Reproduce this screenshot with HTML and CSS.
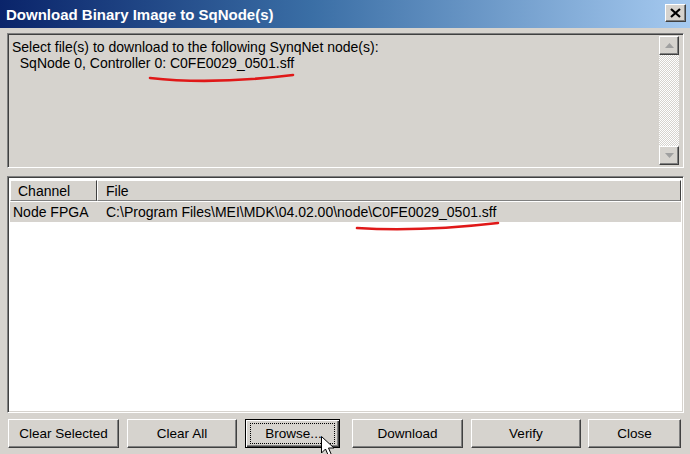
FILE: index.html
```html
<!DOCTYPE html>
<html>
<head>
<meta charset="utf-8">
<link rel="stylesheet" href="styles.css">
</head>
<body>
<div class="window">
  <div class="titlebar">
    <span class="title">Download Binary Image to SqNode(s)</span>
    <div class="close-btn">
      <svg width="11" height="10" viewBox="0 0 11 10"><path d="M1 1 L10 9 M10 1 L1 9" stroke="#000" stroke-width="2.2"/></svg>
    </div>
  </div>
  <div class="content">
    <div class="info sunken">
      <div class="info-text">Select file(s) to download to the following SynqNet node(s):
  SqNode 0, Controller 0: C0FE0029_0501.sff</div>
      <div class="vscroll">
        <div class="sbtn"><svg width="9" height="5" viewBox="0 0 9 5"><path d="M4.5 0 L9 5 L0 5 Z" fill="#a0a0a0"/></svg></div>
        <div class="track"></div>
        <div class="sbtn"><svg width="9" height="5" viewBox="0 0 9 5"><path d="M0 0 L9 0 L4.5 5 Z" fill="#a0a0a0"/></svg></div>
      </div>
    </div>
    <div class="list sunken">
      <div class="header">
        <div class="hcell ch">Channel</div>
        <div class="hcell file">File</div>
      </div>
      <div class="row selected">
        <div class="cell ch">Node FPGA</div>
        <div class="cell file">C:\Program Files\MEI\MDK\04.02.00\node\C0FE0029_0501.sff</div>
      </div>
    </div>
    <div class="buttons">
      <div class="btn w111">Clear Selected</div>
      <div class="btn w110">Clear All</div>
      <div class="btn default w95"><span class="focus">Browse...</span></div>
      <div class="btn w111 gap-wide">Download</div>
      <div class="btn w110">Verify</div>
      <div class="btn w93 gap-narrow">Close</div>
    </div>
  </div>
  <svg class="annot" width="690" height="454" viewBox="0 0 690 454">
    <path d="M150 78 Q 212 85 293 75" stroke="#e01818" stroke-width="2.6" fill="none" stroke-linecap="round"/>
    <path d="M357 228 Q 420 232 498 223" stroke="#e01818" stroke-width="2.6" fill="none" stroke-linecap="round"/>
    <path d="M321.5 436.5 L321.5 453 L325.5 449 L328.5 456 L331.5 455 L328.5 448 L334 448 Z" fill="#fff" stroke="#000" stroke-width="1" stroke-linejoin="miter"/>
  </svg>
</div>
</body>
</html>
```
FILE: styles.css
```css
* { box-sizing: border-box; }
html, body { margin: 0; padding: 0; }
body {
  width: 690px;
  height: 454px;
  overflow: hidden;
  background: #d6d3ce;
  font-family: "Liberation Sans", Arial, sans-serif;
  font-size: 14px;
  color: #000;
}
.window {
  position: relative;
  width: 690px;
  height: 454px;
}
.titlebar {
  height: 28px;
  display: flex;
  align-items: center;
  justify-content: space-between;
  padding: 0 4px 0 6px;
  background: linear-gradient(to right, #0a246a 0%, #3a6ea5 45%, #a6caf0 100%);
}
.title {
  color: #fff;
  font-weight: bold;
  font-size: 15px;
}
.close-btn {
  width: 21px;
  height: 18px;
  margin-top: -2px;
  background: #d6d3ce;
  border: 1px solid;
  border-color: #fff #404040 #404040 #fff;
  box-shadow: inset -1px -1px #808080;
  display: flex;
  align-items: center;
  justify-content: center;
}
.content {
  padding: 5px 6px 0 7px;
}
.sunken {
  border: 1px solid;
  border-color: #808080 #fff #fff #808080;
  box-shadow: inset 1px 1px #404040, inset -1px -1px #d6d3ce;
}
.info {
  height: 135px;
  display: flex;
  padding: 2px;
}
.info-text {
  flex: 1;
  white-space: pre;
  padding: 3px 0 0 2px;
  line-height: 16px;
}
.vscroll {
  width: 20px;
  margin-right: 2px;
  display: flex;
  flex-direction: column;
}
.sbtn {
  height: 19px;
  background: #d6d3ce;
  border: 1px solid;
  border-color: #fff #404040 #404040 #fff;
  box-shadow: inset -1px -1px #808080;
  display: flex;
  align-items: center;
  justify-content: center;
}
.track {
  flex: 1;
  background-color: #eeedea;
  background-image: repeating-conic-gradient(#d6d3ce 0 25%, #fff 0 50%);
  background-size: 2px 2px;
}
.list {
  margin-top: 8px;
  height: 237px;
  background: #fff;
  padding: 2px;
  display: flex;
  flex-direction: column;
}
.header {
  display: flex;
  height: 21px;
  margin-top: 1px;
  background: #d6d3ce;
}
.hcell {
  height: 21px;
  display: flex;
  align-items: center;
  border: 1px solid;
  border-color: #fff #404040 #808080 #fff;
}
.hcell.ch { width: 87px; padding-left: 7px; }
.hcell.file { flex: 1; padding-left: 8px; }
.row {
  display: flex;
  height: 20px;
  align-items: center;
  margin-top: 1px;
}
.row.selected { background: #d6d3ce; }
.cell.ch { width: 87px; padding-left: 3px; }
.cell.file { padding-left: 9px; }
.buttons {
  display: flex;
  gap: 8px;
  margin-top: 6px;
  padding-left: 1px;
}
.btn {
  height: 29px;
  display: flex;
  align-items: center;
  justify-content: center;
  background: #d6d3ce;
  border: 1px solid;
  border-color: #fff #404040 #404040 #fff;
  box-shadow: inset -1px -1px #808080;
  font-size: 13.5px;
}
.btn.default {
  border: 1px solid #000;
  box-shadow: inset 1px 1px #fff, inset -1px -1px #404040, inset -2px -2px #808080;
}
.focus {
  border: 1px dotted #000;
  padding: 3px 8px 3px 10px;
  width: 85px;
  height: 21px;
  display: flex;
  align-items: center;
  justify-content: center;
}
.w111 { width: 111px; }
.w110 { width: 110px; }
.w95 { width: 95px; }
.w93 { width: 93px; }
.gap-wide { margin-left: 4px; }
.gap-narrow { margin-left: -1px; }
.annot {
  position: absolute;
  left: 0;
  top: 0;
  pointer-events: none;
}
```
